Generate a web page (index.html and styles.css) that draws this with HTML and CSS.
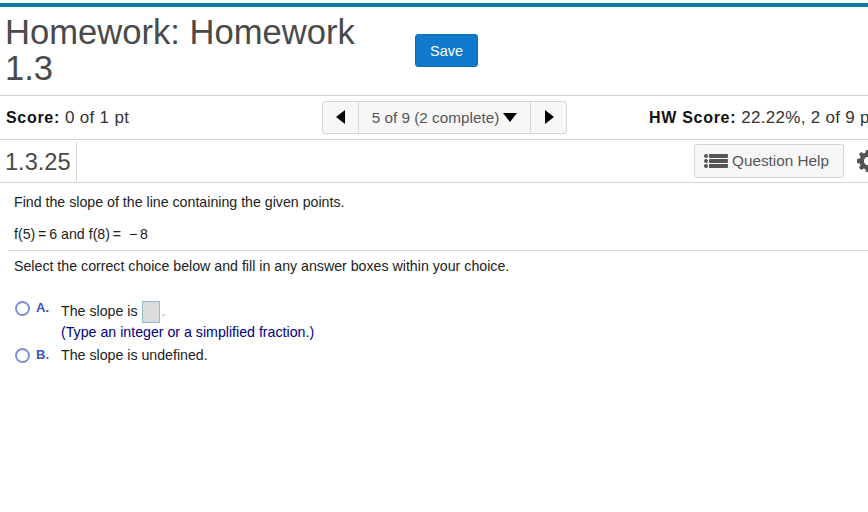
FILE: index.html
```html
<!DOCTYPE html>
<html lang="en">
<head>
    <meta charset="UTF-8">
    <meta name="viewport" content="width=device-width, initial-scale=1.0">
    <title>Homework 1.3</title>
    <link rel="stylesheet" href="styles.css">
</head>
<body>
    <div class="top-bar"></div>

    <header class="title-row">
        <h1 class="title">Homework: Homework 1.3</h1>
        <button class="save-button">Save</button>
    </header>

    <div class="score-row">
        <div class="score"><b>Score:</b> 0 of 1 pt</div>
        <div class="pager">
            <button class="pager-arrow">
                <svg width="10" height="14" viewBox="0 0 10 14"><path d="M9 0V14L0 7Z"/></svg>
            </button>
            <button class="pager-label"><span class="pager-text">5 of 9 (2 complete)</span>
                <svg width="14" height="9" viewBox="0 0 14 9"><path d="M0 0H14L7 9Z"/></svg>
            </button>
            <button class="pager-arrow">
                <svg width="10" height="14" viewBox="0 0 10 14"><path d="M1 0V14L10 7Z"/></svg>
            </button>
        </div>
        <div class="hw-score"><b>HW Score:</b> 22.22%, 2 of 9 pts</div>
    </div>

    <div class="question-row">
        <div class="question-number">1.3.25</div>
        <button class="help-button">
            <svg width="24" height="14" viewBox="0 0 24 14">
                <circle cx="2" cy="2" r="2"/><circle cx="2" cy="7" r="2"/><circle cx="2" cy="12" r="2"/>
                <rect x="5" y="0" width="19" height="4" rx="1"/>
                <rect x="5" y="5" width="19" height="4" rx="1"/>
                <rect x="5" y="10" width="19" height="4" rx="1"/>
            </svg>
            Question Help
        </button>
        <svg class="gear" width="22" height="22" viewBox="0 0 22 22">
            <path fill-rule="evenodd" d="M9 0h4l.6 2.800 1.700.7L17.700 2l2.300 2.300-1.500 2.400.7 1.700 2.800.6v4l-2.800.6-.7 1.700 1.500 2.400-2.300 2.300-2.400-1.500-1.700.7L13 22H9l-.6-2.800-1.700-.7L4.300 20 2 17.700l1.500-2.400-.7-1.700L0 13V9l2.800-.6.7-1.700L2 4.300 4.300 2l2.400 1.500 1.700-.7ZM11 7a4 4 0 1 0 0 8 4 4 0 0 0 0-8Z"/>
        </svg>
    </div>

    <div class="question">
        <p class="line">Find the slope of the line containing the given points.</p>
        <p class="line line-math">f(5)&thinsp;=&thinsp;6 and f(8)&thinsp;= &nbsp;&minus;&thinsp;8</p>
        <div class="divider"></div>
        <p class="line">Select the correct choice below and fill in any answer boxes within your choice.</p>

        <div class="choice choice-a">
            <span class="radio"></span>
            <span class="choice-letter">A.</span>
            <div>
                <div class="choice-text">The slope is <span class="answer-box"></span><span class="dot">.</span></div>
                <div class="hint">(Type an integer or a simplified fraction.)</div>
            </div>
        </div>
        <div class="choice choice-b">
            <span class="radio"></span>
            <span class="choice-letter">B.</span>
            <div class="choice-text">The slope is undefined.</div>
        </div>
    </div>
</body>
</html>
```

FILE: styles.css
```css
body {
    font-family: 'Liberation Sans', Arial, sans-serif;
    background-color: #ffffff;
    color: #111;
    margin: 0;
    padding: 0;
    width: 868px;
    height: 512px;
    overflow: hidden;
}

button {
    font-family: inherit;
}

.top-bar {
    height: 4px;
    margin-top: 3px;
    background-color: #007fa3;
}

.title-row {
    height: 88px;
    display: flex;
    align-items: flex-start;
    border-bottom: 1px solid #d0d3dc;
}

.title {
    width: 380px;
    margin: 7px 0 0 5px;
    font-size: 34.600px;
    font-weight: normal;
    line-height: 36px;
    color: #4a4a4a;
}

.save-button {
    width: 63px;
    height: 33px;
    margin: 27px 0 0 30px;
    background-color: #0f7acb;
    border: 1px solid #0e6eb8;
    border-radius: 3px;
    color: #fff;
    font-size: 14.500px;
}

.score-row {
    height: 43px;
    display: flex;
    align-items: center;
    overflow: hidden;
    border-bottom: 1px solid #d0d3dc;
    font-size: 17px;
    letter-spacing: 0.3px;
    color: #333;
}

.score-row b {
    font-size: 16px;
    color: #111;
    letter-spacing: 0.7px;
}

.score {
    width: 322px;
    flex-shrink: 0;
    padding: 1px 0 0 6px;
    box-sizing: border-box;
}

.pager {
    display: flex;
    flex-shrink: 0;
    height: 33px;
    border: 1px solid #d5d5d5;
    border-radius: 3px;
    background-color: #f7f7f7;
    box-sizing: border-box;
    margin-top: -1px;
}

.pager button {
    border: none;
    background: none;
    padding: 0;
    display: flex;
    align-items: center;
    justify-content: center;
}

.pager-arrow {
    width: 35px;
}

.pager-label {
    width: 173px;
    gap: 4px;
    border-left: 1px solid #d5d5d5 !important;
    border-right: 1px solid #d5d5d5 !important;
    font-size: 15.300px;
    letter-spacing: 0;
    color: #555;
}

.pager-text {
    padding-top: 1px;
}

.hw-score {
    margin-left: 82px;
    padding-top: 1px;
    white-space: nowrap;
}

.question-row {
    height: 42px;
    display: flex;
    align-items: center;
    border-bottom: 1px solid #d0d3dc;
}

.question-number {
    width: 71px;
    height: 39px;
    flex-shrink: 0;
    margin-left: 5px;
    border-right: 1px solid #d0d3dc;
    font-size: 23.600px;
    line-height: 41px;
    color: #4a4a4a;
}

.help-button {
    display: flex;
    align-items: center;
    flex-shrink: 0;
    gap: 4px;
    width: 150px;
    height: 34px;
    margin-left: 617px;
    padding: 0 0 0 9px;
    background-color: #f7f7f7;
    border: 1px solid #d5d5d5;
    border-radius: 3px;
    color: #555;
    font-size: 15.300px;
    box-sizing: border-box;
}

.help-button svg {
    flex-shrink: 0;
    fill: #555;
}

.gear {
    flex-shrink: 0;
    margin-left: 13px;
    fill: #555;
}

.question {
    font-size: 14.200px;
    color: #222;
}

.line {
    margin: 0;
    padding-left: 14px;
}

.question > .line:first-child {
    margin-top: 11px;
}

.line-math {
    margin-top: 16px;
}

.divider {
    height: 1px;
    margin: 8px 0 7px 8px;
    background-color: #d0d3dc;
}

.choice {
    display: flex;
    align-items: flex-start;
    padding-left: 15px;
}

.choice-a {
    margin-top: 26px;
}

.choice-b {
    margin-top: 7px;
}

.radio {
    width: 11px;
    height: 11px;
    margin-top: 1px;
    border: 2px solid #7b8fd6;
    border-radius: 50%;
    background-color: #fff;
}

.choice-letter {
    width: 25px;
    margin-left: 6px;
    font-size: 13px;
    font-weight: bold;
    color: #3c52c0;
}

.choice-text {
    line-height: 16px;
}

.choice-a .choice-text {
    margin-top: 1px;
}

.answer-box {
    display: inline-block;
    width: 16px;
    height: 20px;
    margin-left: 1px;
    vertical-align: middle;
    background-color: #dcdcdc;
    border: 1px solid #8fbccf;
}

.dot {
    margin-left: 1px;
    color: #7fb0c4;
}

.hint {
    margin-top: 1px;
    color: #000080;
}
```
